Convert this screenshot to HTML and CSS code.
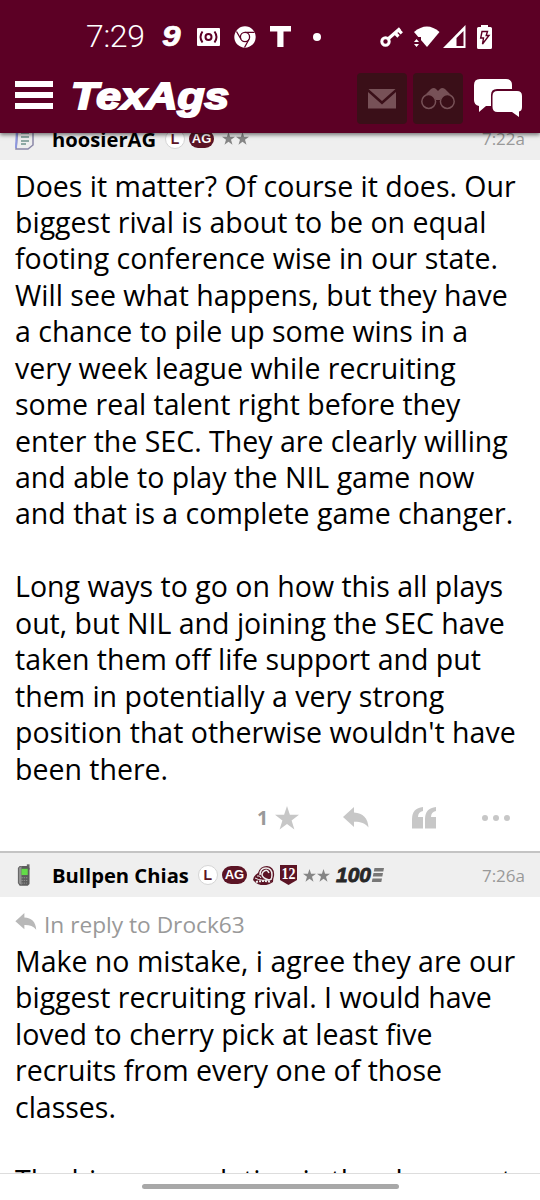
FILE: index.html
```html
<!DOCTYPE html>
<html lang="en">
<head>
    <meta charset="UTF-8">
    <meta name="viewport" content="width=device-width, initial-scale=1.0">
    <title>TexAgs</title>
    <link rel="stylesheet" href="styles.css">
</head>
<body>
    <svg class="defs" width="0" height="0">
        <symbol id="star" viewBox="0 0 24 24"><path d="M12 0l2.9 8.8H24l-7.4 5.6 2.8 9L12 18l-7.4 5.4 2.8-9L0 8.8h9.1z"/></symbol>
        <symbol id="reply" viewBox="0 0 26 22"><path d="M0 10L11 0v5.500c9 .5 14 5.500 14.500 15C22 16 17 14.500 11 14.700V20z"/></symbol>
    </svg>

    <header>
        <div class="status-bar">
            <span class="clock">7:29</span>
            <span class="nine">9</span>
            <svg class="cash" width="23" height="18" viewBox="0 0 23 18"><rect width="23" height="18" rx="1" fill="#fff"/><g fill="none" stroke="#5c0025" stroke-width="2"><circle cx="11.500" cy="9" r="3"/><path d="M5.500 3.500q-4 5.500 0 11M17.500 3.500q4 5.500 0 11"/></g></svg>
            <svg class="chrome" width="22" height="22" viewBox="0 0 22 22"><circle cx="11" cy="11" r="10.700" fill="#fff"/><g fill="none" stroke="#5c0025" stroke-width="1.300"><circle cx="11" cy="11" r="4.600"/><path d="M11 6.400h9.500M7 13.300L2.500 5.500M15 13.300L10.500 21.500"/></g></svg>
            <svg class="tee" width="21" height="21" viewBox="0 0 21 21"><path d="M0 0h21v5.500h-7.500V21H7.300V5.500H0z" fill="#fff"/></svg>
            <span class="dot"></span>
            <svg class="key" width="23" height="20" viewBox="0 0 23 20"><g fill="none" stroke="#fff"><circle cx="5.500" cy="14.500" r="3.700" stroke-width="3"/><path d="M8 12L20 1.500M15 6l3.500 3.500M18.500 3l3.300 3.300" stroke-width="3.200"/></g></svg>
            <svg class="wifi" width="26" height="22" viewBox="0 0 26 22"><path d="M0 6Q13-5 25.500 6L13 21z" fill="#fff"/><path d="M0 11h7v11H0z" fill="#5c0025"/><path d="M0 16l2.500-3L5 16zM0 18l2.500 3L5 18z" fill="#fff"/></svg>
            <svg class="signal" width="23" height="23" viewBox="0 0 23 23"><path d="M0 23L22.500 0v23z" fill="#fff"/><path d="M13.500 13l7-7v15h-7z" fill="#5c0025"/></svg>
            <svg class="battery" width="15" height="24" viewBox="0 0 15 24"><path d="M4 0h7v2h2.500q1.500 0 1.500 1.500v19q0 1.500-1.500 1.500h-12Q0 24 0 22.500v-19Q0 2 1.500 2H4z" fill="#fff"/><path d="M5 6.500h5.500l-1.300 4H12L5.500 19l1-6H3.700z" fill="none" stroke="#5c0025" stroke-width="1.400"/></svg>
        </div>
        <nav>
            <div class="menu"><span></span><span></span><span></span></div>
            <svg class="logo" width="162" height="42" viewBox="0 0 162 42"><text x="-1" y="30.500" textLength="158" lengthAdjust="spacingAndGlyphs">TexAgs</text></svg>
            <div class="nav-button"><svg width="28" height="20" viewBox="0 0 28 20"><path d="M.5 0h27L14 12zM0 3l14 12.500L28 3v16.500H0z"/></svg></div>
            <div class="nav-button"><svg width="34" height="22" viewBox="0 0 34 22"><path d="M5 6L10 1q3-2 5 0l2 2 2-2q2-2 5 0l5 5-7 3-3 3h-4l-3-3z"/><g fill="#3a0f18" stroke="#775157" stroke-width="1.500"><circle cx="7.700" cy="13.500" r="6.900"/><circle cx="26.300" cy="13.500" r="6.900"/></g></svg></div>
            <svg class="chat" width="48" height="39" viewBox="0 0 48 39"><path d="M6 0h26q6 0 6 6v4H23q-6 0-6 6v11h-5L5 33v-6q-5-1-5-6V6q0-6 6-6z"/><path d="M23.500 12H43q5 0 5 5v11q0 4-3 4.500V38l-7-5H23.500q-5 0-5-5V17q0-5 5-5z"/></svg>
        </nav>
    </header>

    <main>
        <div class="post-header first">
            <svg class="avatar" width="19" height="22" viewBox="0 0 19 22"><path d="M3 0h15v17l-5 4H1z" fill="#eee" stroke="#8b88a8" stroke-width="1.500"/><path d="M2 0L1 20" stroke="#8c96df" stroke-width="2"/><path d="M6 5h8M6 9h8M6 13h8M6 16h5" stroke="#6f938c" stroke-width="1.500"/></svg>
            <b class="user">hoosierAG</b>
            <span class="badge-l">L</span>
            <span class="badge-ag">AG</span>
            <span class="stars"><svg width="13" height="13"><use href="#star"/></svg><svg width="13" height="13"><use href="#star"/></svg></span>
            <time>7:22a</time>
        </div>
        <div class="post-body">
            Does it matter? Of course it does. Our<br>
            biggest rival is about to be on equal<br>
            footing conference wise in our state.<br>
            Will see what happens, but they have<br>
            a chance to pile up some wins in a<br>
            very week league while recruiting<br>
            some real talent right before they<br>
            enter the SEC. They are clearly willing<br>
            and able to play the NIL game now<br>
            and that is a complete game changer.<br>
            <br>
            Long ways to go on how this all plays<br>
            out, but NIL and joining the SEC have<br>
            taken them off life support and put<br>
            them in potentially a very strong<br>
            position that otherwise wouldn't have<br>
            been there.
        </div>
        <div class="actions">
            <b>1</b>
            <svg class="like" width="24" height="24"><use href="#star"/></svg>
            <svg class="answer" width="26" height="22"><use href="#reply"/></svg>
            <svg class="quote" width="24" height="22" viewBox="0 0 24 22"><path d="M11 0v4Q6 5 6 10h5v11.500H0V12Q0 1 11 0zM24 0v4q-5 1-5 6h5v11.500H13V12Q13 1 24 0z"/></svg>
            <svg class="more" width="28" height="6" viewBox="0 0 28 6"><circle cx="3" cy="3" r="3"/><circle cx="14" cy="3" r="3"/><circle cx="25" cy="3" r="3"/></svg>
        </div>

        <div class="post-header second">
            <svg class="avatar phone" width="19" height="25" viewBox="0 0 19 25"><path d="M11 0h3v6h-3z" fill="#686868"/><path d="M3 2h9l2 2v18l-2 2H3l-2-3V4z" fill="#5d5d5d"/><path d="M2 4l3-2v21l-3-2z" fill="#929292"/><path d="M5 5h7v7H5z" fill="#63dc48"/><path d="M5 15h7M5 18h7M5 21h6" stroke="#999" stroke-dasharray="1.500 1"/></svg>
            <b class="user">Bullpen Chias</b>
            <span class="badge-l">L</span>
            <span class="badge-ag">AG</span>
            <svg class="ring" width="22" height="19" viewBox="0 0 22 19"><path d="M0 14Q1 9 5 7 7 0 14 0q8 1 7 10-1 3-1 6-9 6-17 1z" fill="#5b1425"/><g fill="none" stroke="#eee"><path d="M7 9q0-7 6-7t6 7-6 4-3-7q4-4 6 1" stroke-width="1.500"/><path d="M2 12q7 4 17 1M4 10q3-1 4 2"/><path d="M3 16q8-2 15 0" stroke-dasharray="2 1" stroke-width="2"/></g></svg>
            <svg class="shield" width="17" height="20" viewBox="0 0 17 20"><path d="M0 0h17v15l-8.500 5L0 15z" fill="#5b1425"/><text x="8.500" y="14" textLength="14" lengthAdjust="spacingAndGlyphs">12</text></svg>
            <span class="stars"><svg width="13" height="13"><use href="#star"/></svg><svg width="13" height="13"><use href="#star"/></svg></span>
            <svg class="hundred" width="48" height="16" viewBox="0 0 48 16"><text x="0" y="15" textLength="35" lengthAdjust="spacingAndGlyphs">100</text><path d="M38.500 1H48l-.7 3.500h-9.500zM37.500 6H47l-.7 3.500h-9.500zM36.500 11.500H46l-.7 3.500h-9.500z" fill="#777"/></svg>
            <time>7:26a</time>
        </div>
        <div class="reply-to"><svg width="22" height="18"><use href="#reply"/></svg>In reply to Drock63</div>
        <div class="post-body reply-body">
            Make no mistake, i agree they are our<br>
            biggest recruiting rival. I would have<br>
            loved to cherry pick at least five<br>
            recruits from every one of those<br>
            classes.<br>
            <br>
            The bigger revelation is the class next
        </div>
    </main>

    <footer><span></span></footer>
</body>
</html>
```

FILE: styles.css
```css
* {
    box-sizing: border-box;
    margin: 0;
    padding: 0;
}

body {
    width: 540px;
    height: 1200px;
    display: flex;
    flex-direction: column;
    overflow: hidden;
    background: #fff;
    color: #000;
    font-family: "Open Sans", sans-serif;
}

svg {
    display: block;
    flex: none;
}

.defs {
    position: absolute;
}

header {
    height: 133px;
    flex: none;
    background: #5c0025;
    color: #fff;
    box-shadow: 0 2px 4px rgba(0, 0, 0, 0.5);
    z-index: 1;
}

.status-bar {
    display: flex;
    align-items: center;
    height: 73px;
    padding-left: 86px;
}

.clock {
    width: 76px;
    font-family: Roboto, sans-serif;
    font-size: 32px;
    font-weight: 300;
    line-height: 73px;
    letter-spacing: -0.3px;
}

.nine {
    width: 35px;
    font: italic bold 29px/73px "Liberation Sans", sans-serif;
    -webkit-text-stroke: 0.7px #fff;
    transform-origin: left;
    transform: scaleX(1.15);
}

.chrome {
    margin-left: 14px;
}

.tee {
    margin-left: 14px;
}

.dot {
    width: 8px;
    height: 8px;
    margin-left: 22px;
    border-radius: 50%;
    background: #fff;
}

.key {
    margin-left: 59px;
}

.wifi {
    margin-left: 11px;
}

.signal {
    margin-left: 3px;
}

.battery {
    margin-left: 11px;
}

nav {
    display: flex;
    height: 52px;
    padding-left: 15px;
}

.menu {
    display: flex;
    flex-direction: column;
    gap: 5px;
    width: 38px;
    padding-top: 8px;
}

.menu span {
    height: 6px;
    background: #fff;
}

.logo {
    margin: 5px 123px 0 19px;
    overflow: visible;
}

.logo text {
    font: italic bold 37px "Liberation Sans", sans-serif;
    fill: #fff;
    stroke: #fff;
    stroke-width: 2px;
}

.nav-button {
    display: flex;
    align-items: center;
    justify-content: center;
    width: 50px;
    height: 51px;
    margin-right: 6px;
    border-radius: 4px;
    background: #3a0f18;
    fill: #775157;
}

.chat {
    margin: 6px 0 0 5px;
    fill: #fff;
}

main {
    height: 1040px;
    flex: none;
    overflow: hidden;
}

.post-header {
    display: flex;
    align-items: center;
    height: 45px;
    padding: 0 15px;
    border-top: 2px solid #c4c4c4;
    background: #efefef;
}

.first {
    margin-top: -18px;
}

.second {
    height: 46px;
}

.avatar {
    margin-right: 18px;
}

.phone {
    padding-left: 2px;
}

.user {
    font-size: 20.2px;
    line-height: 40px;
}

.badge-l, .badge-ag {
    height: 20px;
    font: bold 13px/18px "Liberation Sans", sans-serif;
    text-align: center;
}

.badge-l {
    width: 20px;
    margin-left: 9px;
    border: 1px solid #d5d5d5;
    border-radius: 50%;
    background: #fff;
    color: #5b1425;
    font-size: 14px;
}

.badge-ag {
    width: 25px;
    height: 18px;
    margin-left: 4px;
    border-radius: 9px;
    background: #5b1425;
    color: #fff;
}

.ring {
    margin-left: 6px;
}

.shield {
    margin-left: 5px;
}

.shield text {
    font: bold 16px "Liberation Serif", serif;
    fill: #fff;
    text-anchor: middle;
}

.stars {
    display: flex;
    gap: 1px;
    margin-left: 8px;
    fill: #858585;
}

.shield + .stars {
    margin-left: 6px;
}

.hundred {
    margin-left: 6px;
    overflow: visible;
}

.hundred text {
    font: italic bold 20px "Liberation Sans", sans-serif;
    fill: #282828;
    stroke: #282828;
    stroke-width: 0.8px;
}

time {
    margin-left: auto;
    color: #999;
    font-size: 17px;
}

.post-body {
    height: 626px;
    padding: 7.5px 0 0 15px;
    font-size: 28.5px;
    line-height: 36.43px;
    white-space: nowrap;
}

.actions {
    display: flex;
    align-items: center;
    height: 65px;
    padding: 0 0 2px 257px;
    color: #999;
    fill: #c7c7c7;
    font-size: 19.5px;
}

.like {
    margin-left: 7px;
}

.answer {
    margin-left: 44px;
}

.quote {
    margin-left: 43px;
}

.more {
    margin-left: 46px;
}

.reply-to {
    display: flex;
    gap: 7px;
    height: 46px;
    padding: 11px 0 0 15px;
    color: #999;
    fill: #b8b8b8;
    font-size: 22.7px;
    line-height: 34px;
}

.reply-to svg {
    margin-top: 5px;
}

.reply-body {
    height: auto;
    padding-top: 0;
}

footer {
    display: flex;
    justify-content: center;
    height: 27px;
    padding-top: 10px;
    border-top: 1px solid #ddd;
}

footer span {
    width: 257px;
    height: 5px;
    border-radius: 3px;
    background: #a8a8a8;
}
```
